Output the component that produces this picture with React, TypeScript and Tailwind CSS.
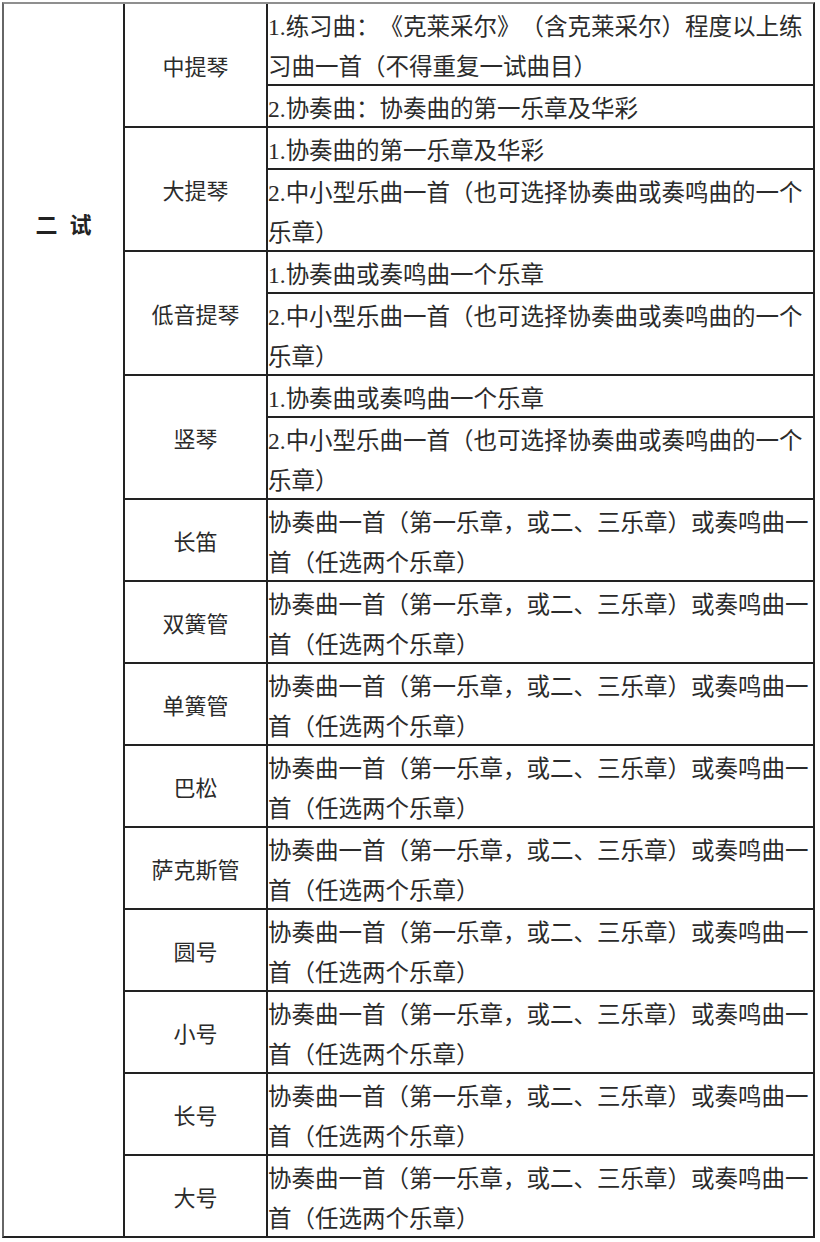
import React from "react";

type Sub = string[];
type Row = { name: string; subs: Sub[] };

const WIND: Sub = ["协奏曲一首（第一乐章，或二、三乐章）或奏鸣曲一", "首（任选两个乐章）"];
const MID: Sub = ["2.中小型乐曲一首（也可选择协奏曲或奏鸣曲的一个", "乐章）"];

const rows: Row[] = [
  {
    name: "中提琴",
    subs: [
      ["1.练习曲：《克莱采尔》（含克莱采尔）程度以上练", "习曲一首（不得重复一试曲目）"],
      ["2.协奏曲：协奏曲的第一乐章及华彩"],
    ],
  },
  { name: "大提琴", subs: [["1.协奏曲的第一乐章及华彩"], MID] },
  { name: "低音提琴", subs: [["1.协奏曲或奏鸣曲一个乐章"], MID] },
  { name: "竖琴", subs: [["1.协奏曲或奏鸣曲一个乐章"], MID] },
  { name: "长笛", subs: [WIND] },
  { name: "双簧管", subs: [WIND] },
  { name: "单簧管", subs: [WIND] },
  { name: "巴松", subs: [WIND] },
  { name: "萨克斯管", subs: [WIND] },
  { name: "圆号", subs: [WIND] },
  { name: "小号", subs: [WIND] },
  { name: "长号", subs: [WIND] },
  { name: "大号", subs: [WIND] },
];

function SubCell({ lines, last }: { lines: string[]; last: boolean }) {
  let h = "";
  if (lines.length === 2) h = last ? "h-[80px]" : "h-[82px]";
  else h = last ? "h-[40px]" : "h-[42px]";
  return (
    <div className={"pt-[3px] leading-[40px] " + h + (last ? "" : " border-b-2 border-[#222]")}>
      {lines.map((l, i) => (
        <div key={i} className="whitespace-nowrap h-[40px]">
          {l}
        </div>
      ))}
    </div>
  );
}

export default function App() {
  return (
    <div className="w-[820px] h-[1242px] bg-white pl-[2px] pt-[2px] text-[#2b2b2b] [text-spacing-trim:space-all] font-['Liberation_Serif','Noto_Sans_CJK_SC',serif]">
      <div className="flex w-[813px] border-2 border-[#222] border-t-[#8f8f8f] border-l-[#666]">
        <div className="w-[121px] shrink-0 border-r-2 border-[#222]">
          <div className="pt-[202px] leading-[40px] flex justify-center gap-[12px] text-[22px] font-bold text-[#222]">
            <span>二</span>
            <span>试</span>
          </div>
        </div>
        <div className="flex-1 flex flex-col">
          {rows.map((r, ri) => (
            <div
              key={ri}
              className={"flex " + (ri === rows.length - 1 ? "" : "border-b-2 border-[#222]")}
            >
              <div className="w-[143px] shrink-0 border-r-2 border-[#222] flex items-center justify-center pt-[4px] text-[22px]">
                {r.name}
              </div>
              <div className="flex-1 flex flex-col text-[23.5px]">
                {r.subs.map((s, si) => (
                  <SubCell key={si} lines={s} last={si === r.subs.length - 1} />
                ))}
              </div>
            </div>
          ))}
        </div>
      </div>
    </div>
  );
}
